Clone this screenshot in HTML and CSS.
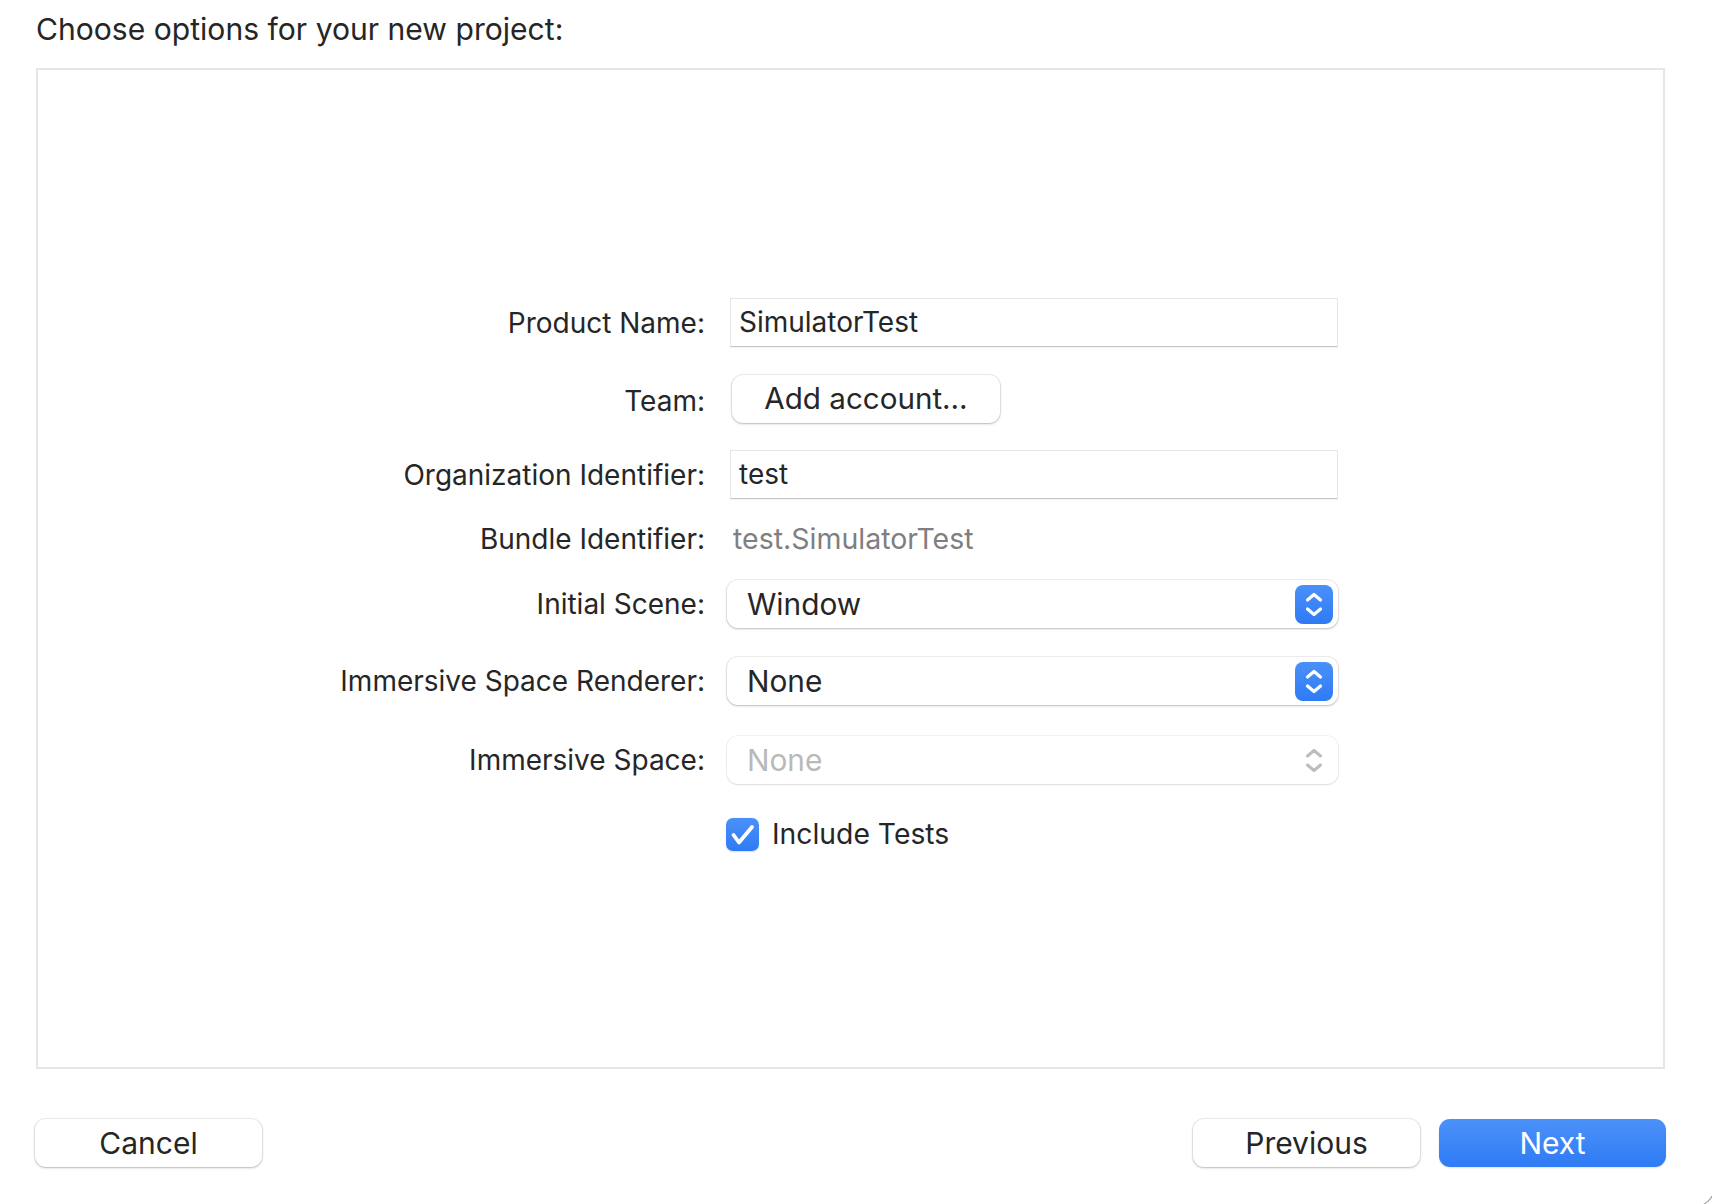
FILE: index.html
```html
<!DOCTYPE html>
<html lang="en">
<head>
<meta charset="utf-8">
<title>Choose options for your new project</title>
<link rel="stylesheet" href="styles.css">
</head>
<body>
<div class="window">
  <h1 class="title">Choose options for your new project:</h1>
  <div class="panel">
    <div class="form">
      <div class="row row-1">
        <div class="label">Product Name:</div>
        <div class="control"><div class="field">SimulatorTest</div></div>
      </div>
      <div class="row row-2">
        <div class="label label-team">Team:</div>
        <div class="control"><div class="push small">Add account…</div></div>
      </div>
      <div class="row row-3">
        <div class="label">Organization Identifier:</div>
        <div class="control"><div class="field">test</div></div>
      </div>
      <div class="row row-4">
        <div class="label">Bundle Identifier:</div>
        <div class="control"><div class="static">test.SimulatorTest</div></div>
      </div>
      <div class="row row-5">
        <div class="label">Initial Scene:</div>
        <div class="control">
          <div class="popup">
            <span class="popup-text">Window</span>
            <span class="stepper">
              <svg width="38" height="39" viewBox="0 0 38 39"><path d="M12.5 15 L19 9.5 L25.5 15 M12.5 24 L19 29.5 L25.5 24" fill="none" stroke="#fff" stroke-width="3.2" stroke-linecap="round" stroke-linejoin="round"/></svg>
            </span>
          </div>
        </div>
      </div>
      <div class="row row-6">
        <div class="label">Immersive Space Renderer:</div>
        <div class="control">
          <div class="popup">
            <span class="popup-text">None</span>
            <span class="stepper">
              <svg width="38" height="39" viewBox="0 0 38 39"><path d="M12.5 15 L19 9.5 L25.5 15 M12.5 24 L19 29.5 L25.5 24" fill="none" stroke="#fff" stroke-width="3.2" stroke-linecap="round" stroke-linejoin="round"/></svg>
            </span>
          </div>
        </div>
      </div>
      <div class="row row-7">
        <div class="label">Immersive Space:</div>
        <div class="control">
          <div class="popup disabled">
            <span class="popup-text">None</span>
            <span class="stepper plain">
              <svg width="38" height="39" viewBox="0 0 38 39"><path d="M12.5 15 L19 9.5 L25.5 15 M12.5 24 L19 29.5 L25.5 24" fill="none" stroke="#bdbdbd" stroke-width="3" stroke-linecap="round" stroke-linejoin="round"/></svg>
            </span>
          </div>
        </div>
      </div>
      <div class="row row-8">
        <div class="label"></div>
        <div class="control">
          <div class="check">
            <span class="checkbox">
              <svg width="33" height="33" viewBox="0 0 33 33"><path d="M7.5 17 L13 24.5 L26 9" fill="none" stroke="#fff" stroke-width="3.8" stroke-linecap="round" stroke-linejoin="round"/></svg>
            </span>
            <span class="check-text">Include Tests</span>
          </div>
        </div>
      </div>
    </div>
  </div>
  <div class="footer">
    <div class="push big">Cancel</div>
    <div class="spacer"></div>
    <div class="push big">Previous</div>
    <div class="push big primary">Next</div>
  </div>
  <div class="corner"></div>
</div>
</body>
</html>
```

FILE: styles.css
```css
html, body {
  margin: 0;
  padding: 0;
  background: #ffffff;
  width: 1712px;
  height: 1204px;
  overflow: hidden;
}

body {
  font-family: Inter, "Noto Sans", "Liberation Sans", sans-serif;
  color: #262626;
  font-size: 28px;
}

.window {
  position: relative;
  width: 1712px;
  height: 1204px;
  overflow: hidden;
}

.title {
  margin: 0;
  padding: 11px 0 0 36px;
  height: 36px;
  line-height: 36px;
  font-size: 30.1px;
  font-weight: 400;
  color: #262626;
}

.panel {
  box-sizing: border-box;
  margin: 21px 0 0 36px;
  width: 1629px;
  height: 1001px;
  border: 2px solid #e6e6e6;
  background: #ffffff;
}

.form {
  padding-top: 228px;
  display: flex;
  flex-direction: column;
}

.row {
  display: grid;
  grid-template-columns: 667px 611px;
  column-gap: 22px;
  align-items: center;
}

.row-1 { height: 49px; }
.row-2 { height: 48px; margin-top: 28px; }
.row-3 { height: 48px; margin-top: 27px; }
.row-4 { height: 30px; margin-top: 24px; }
.row-5 { height: 48px; margin-top: 28px; }
.row-6 { height: 48px; margin-top: 29px; }
.row-7 { height: 48px; margin-top: 31px; }
.row-8 { height: 33px; margin-top: 33px; }

.label {
  text-align: right;
  white-space: nowrap;
  line-height: 34px;
}

.label-team {
  padding-top: 3px;
}

.control {
  display: flex;
  align-items: center;
  height: 100%;
}

.field {
  box-sizing: border-box;
  margin-left: 3px;
  width: 608px;
  height: 49px;
  padding-left: 8px;
  line-height: 47px;
  background: #ffffff;
  border: 1px solid #e6e6e6;
  border-bottom-color: #c4c4c4;
  box-shadow: 0 1px 0 rgba(0, 0, 0, 0.04);
}

.static {
  margin-left: 6px;
  color: #7f7f7f;
  line-height: 30px;
  font-size: 28.5px;
}

.push {
  box-sizing: border-box;
  display: flex;
  align-items: center;
  justify-content: center;
  height: 48px;
  background: #ffffff;
  border-radius: 11px;
  box-shadow: 0 0 0 1px rgba(0, 0, 0, 0.07), 0 1px 2.5px rgba(0, 0, 0, 0.22);
  color: #262626;
}

.push.small {
  margin-left: 5px;
  width: 268px;
  font-size: 29.6px;
  padding-bottom: 3px;
}

.popup {
  box-sizing: border-box;
  width: 611px;
  height: 48px;
  display: flex;
  align-items: center;
  justify-content: space-between;
  padding: 0 5px 0 20px;
  background: #ffffff;
  border-radius: 11px;
  box-shadow: 0 0 0 1px rgba(0, 0, 0, 0.06), 0 1px 2.5px rgba(0, 0, 0, 0.22);
  font-size: 29.8px;
}

.popup.disabled {
  box-shadow: 0 0 0 1px rgba(0, 0, 0, 0.05), 0 1px 2px rgba(0, 0, 0, 0.09);
}

.popup.disabled .popup-text {
  color: #b9b9b9;
}

.stepper {
  width: 38px;
  height: 39px;
  border-radius: 8px;
  background: linear-gradient(#4a90f9, #2f7bf5);
  display: flex;
}

.stepper.plain {
  background: none;
}

.check {
  display: flex;
  align-items: center;
  margin-left: -1px;
}

.checkbox {
  width: 33px;
  height: 33px;
  border-radius: 7px;
  background: linear-gradient(#4a90f9, #2f7bf5);
  display: flex;
  box-shadow: 0 0.5px 1.5px rgba(0, 0, 0, 0.15);
}

.check-text {
  margin-left: 13px;
  font-size: 28.3px;
}

.footer {
  display: flex;
  margin-top: 50px;
  padding: 0 46px 0 35px;
}

.spacer {
  flex: 1;
}

.push.big {
  width: 227px;
  font-size: 30px;
}

.push.primary {
  margin-left: 19px;
  background: linear-gradient(#4b91f9, #2f7bf5);
  color: #ffffff;
  box-shadow: 0 1px 2px rgba(0, 0, 0, 0.12);
}

.corner {
  position: absolute;
  right: -4px;
  bottom: -4px;
  width: 24px;
  height: 24px;
  border-right: 1.5px solid #9a9a9a;
  border-bottom: 1.5px solid #9a9a9a;
  border-bottom-right-radius: 24px;
}
```
